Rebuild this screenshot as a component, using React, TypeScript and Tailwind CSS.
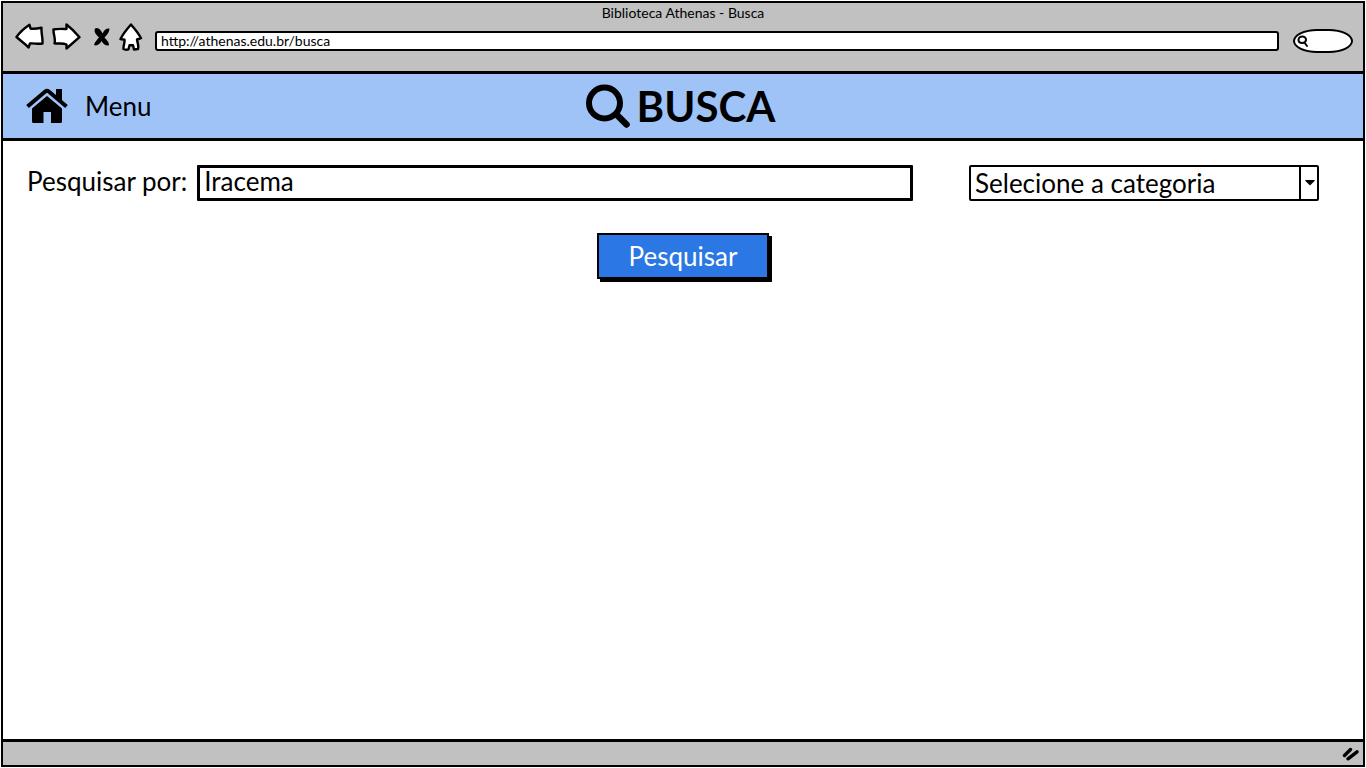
import { useState } from "react";

function BackIcon() {
  return (
    <svg width="30" height="28" viewBox="0 0 30 28" fill="#fff" stroke="#000" strokeWidth="2.4" strokeLinejoin="round" aria-hidden="true">
      <path d="M1.500 14C5 9 9 5.500 14.500 1.800L15.500 5.500C19 6.300 23 5.500 26.500 4.800 26 10 28 15 27.500 20.500 23 21.500 19.500 20 15 20.500L13.500 24.500C10 20.500 6 18 1.500 14Z" />
    </svg>
  );
}

function ForwardIcon() {
  return (
    <svg width="30" height="28" viewBox="0 0 30 28" fill="#fff" stroke="#000" strokeWidth="2.4" strokeLinejoin="round" aria-hidden="true">
      <path d="M2.500 6.500C6 5.500 11 5.800 15.500 6L15.500 1.500C20 5 24.500 9.500 28.500 14.200L15.500 25.500 15.500 21.500C11 19.500 8 21 3.500 20.300 5 16 2 11 2.500 6.500Z" />
    </svg>
  );
}

function StopIcon() {
  return (
    <svg width="18" height="22" viewBox="0 0 18 22" fill="#000" aria-hidden="true">
      <path d="M2 2.500C5 .5 8 4 9.500 7.500 11 4 13.500 2 16.500 2.500 16.500 6 14 9 11.500 11.500 13.500 14 16.500 16 15.800 19.500 12.500 20 10 17.500 8.500 15 7 18 4 20.500 1 19 1.500 16 4.500 13.500 6 11.500 3.500 9 .5 6 2 2.500Z" />
    </svg>
  );
}

function UpIcon() {
  return (
    <svg width="24" height="28" viewBox="0 0 24 28" fill="#fff" stroke="#000" strokeWidth="2.4" strokeLinejoin="round" aria-hidden="true">
      <path d="M12 1.500C15 5 19.500 10 22 15.200L18 16.500C18.500 20 20 23 19 26L15 26.500C14.500 25 14.500 23.500 14 22.300L10.500 22.300 9.500 26.300C8 26.800 6 26.800 4.500 26 4 23 6 20 5.500 16.800L1.500 16C4 11 8 6 12 1.500Z" />
    </svg>
  );
}

function HouseIcon() {
  return (
    <svg width="44" height="36" viewBox="0 0 44 36" aria-hidden="true">
      <path d="M2.500 18.500 20.500 3.300Q22 2.200 23.500 3.300L41.500 18.500" fill="none" stroke="#000" strokeWidth="4" />
      <path d="M31 1h6v14l-6-5ZM22 8 37 20.500V33.500q0 1.500-1.500 1.500H26V24h-7.500V35H8.500Q7 35 7 33.500V20.500Z" />
    </svg>
  );
}

function MagnifierIcon() {
  return (
    <svg width="46" height="46" viewBox="0 0 46 46" fill="none" stroke="#000" strokeLinecap="round" aria-hidden="true">
      <circle cx="19.500" cy="20" r="15.500" strokeWidth="6" />
      <path d="M31.500 31.500 41.500 41.500" strokeWidth="6.500" />
    </svg>
  );
}

export default function App() {
  const [term, setTerm] = useState("Iracema");
  const [address, setAddress] = useState("http://athenas.edu.br/busca");

  return (
    <div className="flex min-h-screen flex-col bg-white p-px font-['Lato',sans-serif] text-black">
      <div className="flex flex-1 flex-col border-2 border-black">
        <header className="border-b-[3px] border-black bg-[#c1c1c1] pb-[18px]">
          <p className="pt-0.5 text-center text-sm leading-4">Biblioteca Athenas - Busca</p>
          <div className="flex h-8 items-center pr-2.5 pl-3">
            <button type="button" aria-label="Voltar"><BackIcon /></button>
            <button type="button" aria-label="Avançar" className="ml-1.5"><ForwardIcon /></button>
            <button type="button" aria-label="Parar" className="ml-3"><StopIcon /></button>
            <button type="button" aria-label="Início" className="ml-2"><UpIcon /></button>
            <input
              aria-label="Endereço"
              value={address}
              onChange={(e) => setAddress(e.target.value)}
              className="mt-2 ml-3 h-5 min-w-0 flex-1 rounded-[3px] border-2 border-black bg-white px-1 pb-0.5 text-sm leading-4 outline-none"
            />
            <div className="mt-2 ml-3.5 flex h-6 w-15 items-center rounded-[24px/12px] border-2 border-black bg-white pl-0.5">
              <svg width="12" height="14" viewBox="0 0 12 14" fill="none" stroke="#000" strokeWidth="2" strokeLinecap="round" aria-hidden="true">
                <path d="M1.500 6C1.500 1 9.500 1.500 9 6 8.500 10 1.500 10 1.500 6ZM7.500 8.500l2.500 3.500" />
              </svg>
              <input aria-label="Pesquisa rápida" className="min-w-0 flex-1 bg-transparent text-sm leading-4 outline-none" />
            </div>
          </div>
        </header>

        <nav className="grid h-[67px] grid-cols-[1fr_auto_1fr] items-center border-b-[3px] border-black bg-[#9fc3f7] pr-7 pl-[22px]">
          <a href="#menu" className="flex items-center gap-4 justify-self-start text-[26px] leading-8">
            <HouseIcon />
            Menu
          </a>
          <h1 className="flex items-center gap-1.5 text-[42px] leading-10 font-bold">
            <MagnifierIcon />
            BUSCA
          </h1>
        </nav>

        <main className="flex-1 px-6 pt-6">
          <form onSubmit={(e) => e.preventDefault()}>
            <div className="flex items-center pr-5">
              <label htmlFor="term" className="pb-1 text-[26px] leading-8">Pesquisar por:</label>
              <input
                id="term"
                value={term}
                onChange={(e) => setTerm(e.target.value)}
                className="ml-2.5 h-9 min-w-0 flex-1 rounded-[1px] border-[3px] border-black bg-white px-1 pb-1 text-[26px] leading-8 outline-none"
              />
              <div className="relative ml-14 w-[350px]">
                <select
                  aria-label="Categoria"
                  className="block h-9 w-full appearance-none rounded-[2px] border-2 border-black bg-white pr-6 pl-1 text-[26px] leading-8 outline-none"
                >
                  <option>Selecione a categoria</option>
                </select>
                <span className="pointer-events-none absolute inset-y-0 right-0 flex w-5 items-center justify-center border-l-2 border-black">
                  <svg width="10" height="6" viewBox="0 0 10 6" aria-hidden="true">
                    <path d="M.5 0h9Q10 .5 9.500 1L5.500 5Q5 5.500 4.500 5L.5 1Q0 .5.5 0Z" />
                  </svg>
                </span>
              </div>
            </div>
            <button
              type="submit"
              className="mx-auto mt-8 block h-[46px] w-[172px] border-2 border-black bg-[#2b78e4] text-[26px] leading-8 text-white shadow-[3px_3px_0_#000]"
            >
              Pesquisar
            </button>
          </form>
        </main>

        <footer className="flex h-[26px] items-center justify-end border-t-[3px] border-black bg-[#c1c1c1] pr-1">
          <svg width="17" height="14" viewBox="0 0 17 14" fill="none" stroke="#000" strokeLinecap="round" aria-hidden="true">
            <path d="M2.500 8.500 8.500 2.500M6 11.800 15 4.800" strokeWidth="3.400" />
          </svg>
        </footer>
      </div>
    </div>
  );
}
